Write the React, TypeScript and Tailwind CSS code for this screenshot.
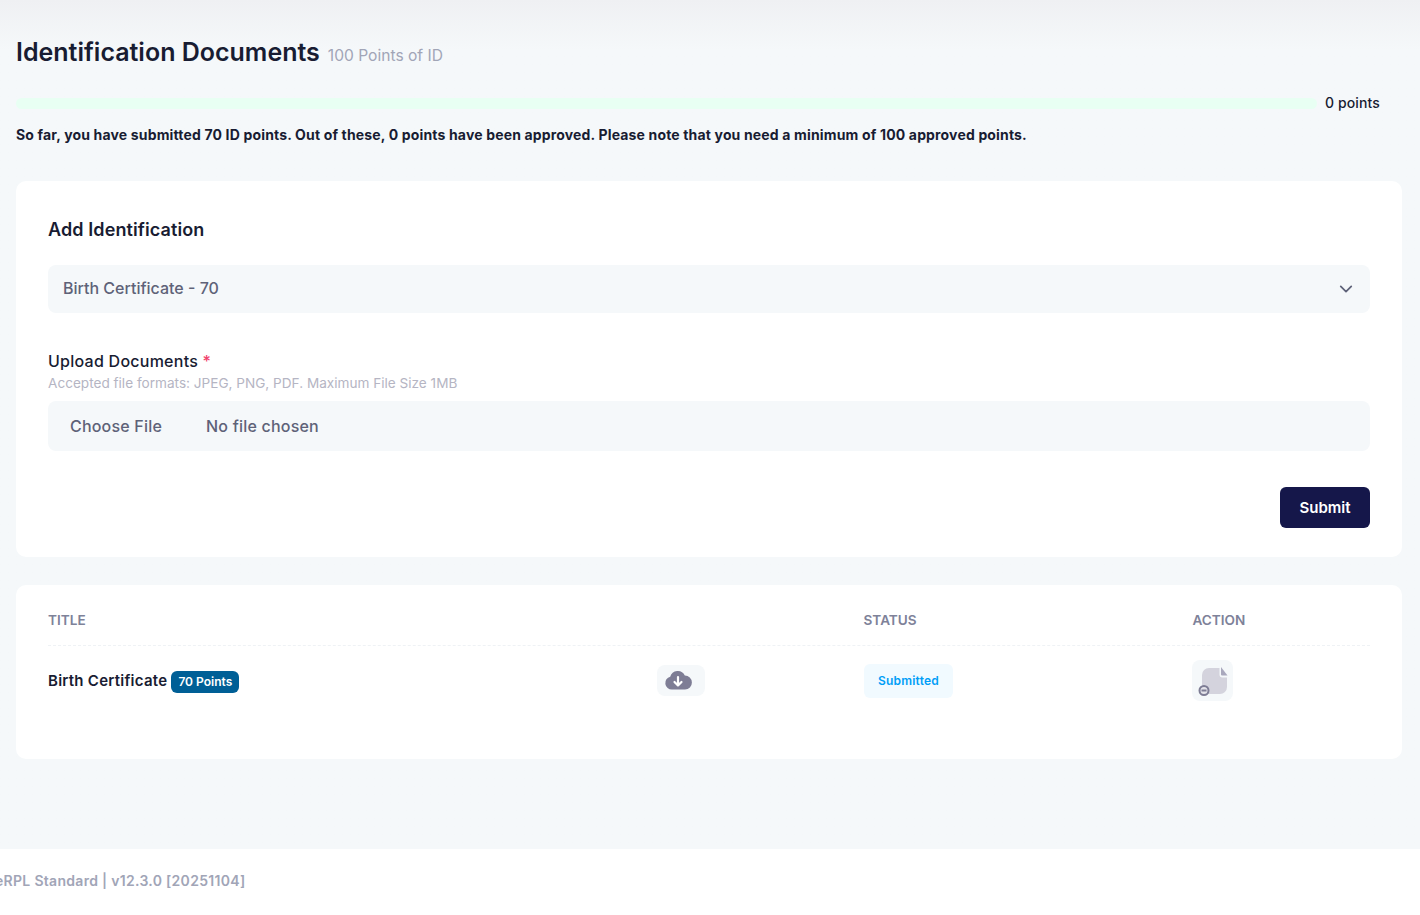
import React from "react";

export default function App() {
  return (
    <div className="flex h-[915px] w-[1420px] flex-col overflow-hidden bg-[#f5f8fa] font-['Inter',sans-serif] text-[#181c32]">
      <main className="flex h-[849px] flex-col bg-gradient-to-b from-[#eff0f3] to-[#f5f8fa] to-[50px] pl-4 pr-[18px]">
        <div className="mt-[35px] flex h-[34px] items-center">
          <h1 className="text-[25px] font-semibold leading-[34px] text-[#181c32]">Identification Documents</h1>
          <span className="ml-2 mt-[7px] text-[15.6px] leading-6 text-[#a1a5b7]">100 Points of ID</span>
        </div>

        <div className="mt-[25px] flex h-[18px] items-center">
          <div className="h-[11px] w-[1301px] rounded-md bg-[#e8fff3]" />
          <span className="ml-2 text-sm font-medium tracking-[0.1px] text-[#181c32]">0 points</span>
        </div>

        <p className="mt-[13px] text-sm font-bold leading-5 tracking-[0.16px] text-[#181c32]">
          So far, you have submitted 70 ID points. Out of these, 0 points have been approved. Please note that you need a minimum of 100 approved points.
        </p>

        <section className="mt-9 h-[376px] rounded-[10px] bg-white px-8 pt-[35px]">
          <h2 className="text-lg font-semibold leading-[27px] tracking-[0.1px] text-[#181c32]">Add Identification</h2>
          <div className="mt-[22px] flex h-12 items-center justify-between rounded-lg bg-[#f5f8fa] pb-0.5 pl-[15px] pr-[17px] text-base font-medium text-[#5e6278]">
            <span>Birth Certificate - 70</span>
            <svg width="14" height="14" viewBox="0 0 16 16" fill="none" stroke="#5e6278" strokeWidth="2" strokeLinecap="round" strokeLinejoin="round" className="mt-0.5">
              <path d="M2 5l6 6 6-6" />
            </svg>
          </div>

          <div className="mt-[37px] text-base font-medium leading-[22px] tracking-[0.25px] text-[#181c32]">
            Upload Documents <span className="text-[#f1416c]">*</span>
          </div>
          <div className="mt-[1px] text-[13.6px] leading-[20px] text-[#b5b5c3]">Accepted file formats: JPEG, PNG, PDF. Maximum File Size 1MB</div>
          <div className="mt-2 flex h-[50px] items-center rounded-lg bg-[#f5f8fa] pl-[22px] text-base font-medium tracking-[0.2px] text-[#5e6278]">
            <span>Choose File</span>
            <span className="ml-11">No file chosen</span>
          </div>

          <div className="mt-9 flex justify-end">
            <button className="h-[41px] w-[90px] rounded-md bg-[#15174a] pt-0.5 text-[15px] font-semibold text-white">Submit</button>
          </div>
        </section>

        <section className="mt-7 h-[174px] rounded-[10px] bg-white px-8">
          <div className="flex h-[61px] items-end border-b border-dashed border-[#eff2f5] pb-[15px] text-[13.6px] font-semibold leading-5 text-[#7e8299]">
            <span className="w-[815.5px]">TITLE</span>
            <span className="w-[329px]">STATUS</span>
            <span>ACTION</span>
          </div>
          <div className="flex h-[70px] items-center">
            <div className="flex w-[609px] items-center">
              <span className="text-[15px] font-semibold tracking-[0.25px] text-[#181c32]">Birth Certificate</span>
              <span className="ml-1 mt-0.5 flex h-[22px] w-[68px] items-center justify-center rounded-md bg-[#005f96] text-xs font-semibold text-white">70 Points</span>
            </div>
            <div className="mb-0.5 flex h-[31px] w-12 items-center justify-center rounded-lg bg-[#f5f8fa]">
              <svg width="28" height="24" viewBox="0 0 28 24" className="mr-1.5">
                <path d="M8 21.500a6.500 6.500 0 0 1-1.800-12.800A7.800 7.800 0 0 1 20.800 7.500 7 7 0 0 1 21 21.500Z" fill="#7e7d95" />
                <path d="M14 9v8.500M10.500 14l3.500 3.500 3.500-3.500" fill="none" stroke="#fff" strokeWidth="2.200" strokeLinecap="round" strokeLinejoin="round" />
              </svg>
            </div>
            <div className="ml-[159px] flex h-[34px] w-[89px] items-center justify-center rounded-md bg-[#f1faff] text-xs font-semibold tracking-[0.2px] text-[#009ef7]">Submitted</div>
            <div className="mb-0.5 ml-[239px] flex h-[41px] w-[41px] items-center justify-center rounded-lg bg-[#f5f8fa]">
              <svg width="32" height="32" viewBox="0 0 32 32">
                <path d="M12 4h10.500v6.500a3 3 0 0 0 3 3h4.500v9.500a7 7 0 0 1-7 7H12a7 7 0 0 1-7-7V11a7 7 0 0 1 7-7Z" fill="#d4d3dd" />
                <path d="M24 3l6.500 8.500h-5.500a1 1 0 0 1-1-1Z" fill="#a9a8bd" />
                <circle cx="7" cy="26.500" r="4.500" fill="#e4e3ea" stroke="#7e7d95" strokeWidth="2" />
                <path d="M4.500 26.500h5" stroke="#7e7d95" strokeWidth="2" />
              </svg>
            </div>
          </div>
        </section>
      </main>

      <footer className="flex h-[66px] items-center overflow-hidden bg-white pb-0.5">
        <span className="ml-[-5px] whitespace-nowrap text-sm font-semibold tracking-[0.3px] text-[#a1a5b7]">eRPL Standard | v12.3.0 [20251104]</span>
      </footer>
    </div>
  );
}
